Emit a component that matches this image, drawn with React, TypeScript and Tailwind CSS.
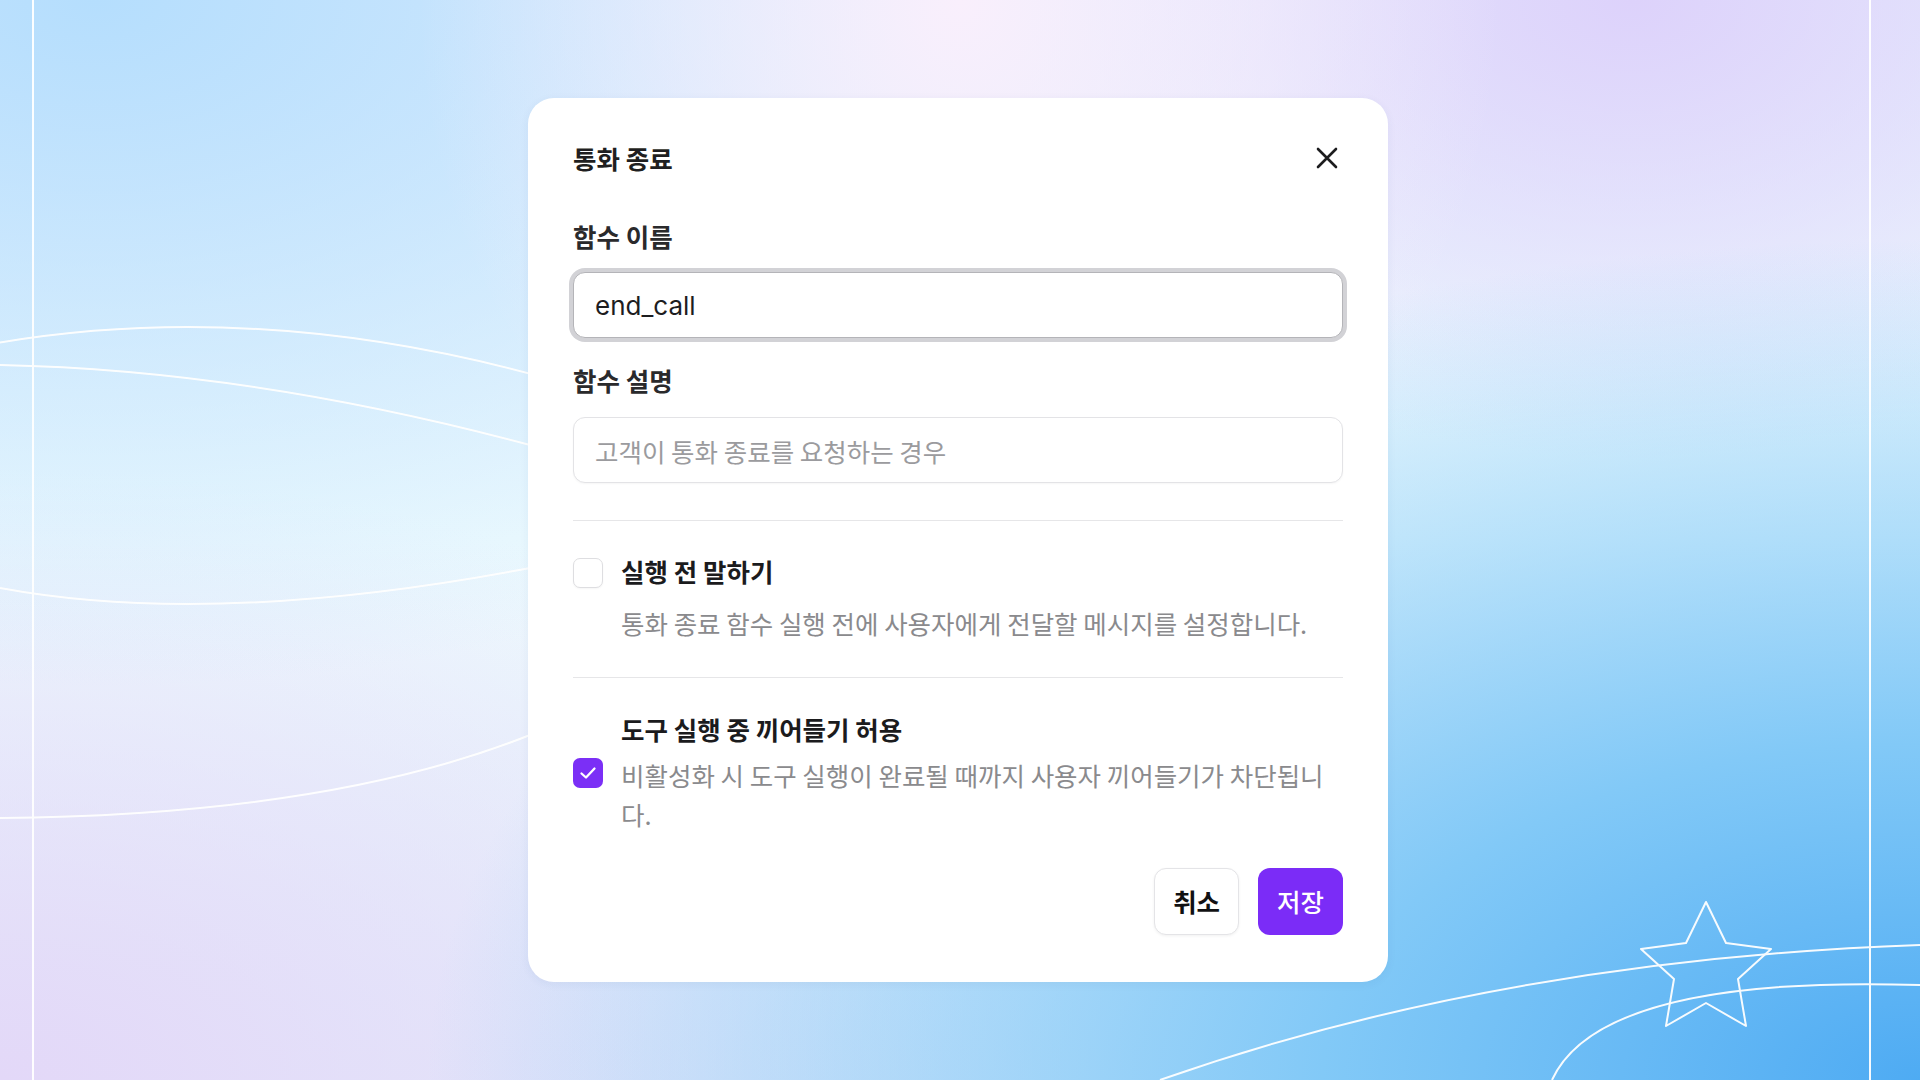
import React from 'react'

function CloseIcon() {
  return (
    <svg width="22" height="22" viewBox="0 0 22 22" fill="none">
      <path d="M2 2L20 20M20 2L2 20" stroke="#1c1c1e" strokeWidth="2.6" strokeLinecap="round" />
    </svg>
  )
}

function CheckIcon() {
  return (
    <svg width="22" height="22" viewBox="0 0 22 22" fill="none">
      <path d="M4.5 11.5L9 15.5L17.5 6.5" stroke="white" strokeWidth="2.3" strokeLinecap="round" strokeLinejoin="round" />
    </svg>
  )
}

// 배경 라인 + 별 장식
function Backdrop() {
  return (
    <svg className="absolute inset-0 h-full w-full" viewBox="0 0 1920 1080" preserveAspectRatio="none" fill="none">
      <g stroke="white" strokeWidth="2" opacity="0.95">
        <path d="M33 0V1080" />
        <path d="M1870 0V1080" />
        <path d="M-50 352Q240 290 560 382" />
        <path d="M0 365Q250 370 530 445" />
        <path d="M0 588Q215 628 530 568" />
        <path d="M0 818Q330 815 530 735" />
        <path d="M1160 1080Q1500 960 1920 945" />
        <path d="M1552 1080Q1600 975 1920 985" />
        <path
          d="M1706 902L1726 943L1771 949L1738 979L1746 1026L1706 1003L1666 1026L1674 979L1641 949L1686 943Z"
          strokeLinejoin="round"
        />
      </g>
    </svg>
  )
}

export default function App() {
  return (
    <div className="relative h-screen w-full overflow-hidden bg-[radial-gradient(ellipse_at_100%_100%,#4eabf3_0%,#82c9f7_22%,rgba(180,225,252,0)_55%),radial-gradient(ellipse_at_50%_0%,#f9effc_0%,rgba(249,239,252,0)_40%),radial-gradient(ellipse_at_85%_0%,#ddd2fb_0%,rgba(221,210,251,0)_30%),radial-gradient(ellipse_at_5%_0%,#b5defd_0%,rgba(190,227,253,0)_45%),radial-gradient(ellipse_at_0%_100%,#e3d8f8_0%,rgba(227,216,248,0)_40%),linear-gradient(180deg,#e8f0fd_0%,#effbfe_50%,#e4eefb_100%)] font-['Noto_Sans_CJK_KR',sans-serif]">
      <Backdrop />

      <div className="relative flex h-full items-center justify-center pr-[4px]">
        <div className="w-[860px] rounded-[26px] bg-white px-[45px] pt-[44px] pb-[47px] shadow-[0_2px_10px_rgba(40,60,120,0.06)]">
          {/* 헤더 */}
          <div className="flex h-[32px] items-center justify-between">
            <h1 className="text-[25.5px] leading-[32px] font-semibold text-[#1f1f21]">통화 종료</h1>
            <button type="button" className="flex h-[32px] w-[32px] items-center justify-center">
              <CloseIcon />
            </button>
          </div>

          {/* 함수 이름 */}
          <label className="mt-[46px] block text-[25.5px] leading-[32px] font-semibold text-[#2a2a2c]">함수 이름</label>
          <input
            type="text"
            defaultValue="end_call"
            readOnly
            className="mt-[20px] block h-[66px] w-full rounded-[12px] border border-[#b4b4b8] bg-white px-[21px] font-['Inter','Noto_Sans_CJK_KR',sans-serif] text-[26px] text-[#1d1d1f] shadow-[0_0_0_4px_#d2d2d6] outline-none"
          />

          {/* 함수 설명 */}
          <label className="mt-[26px] block text-[25.5px] leading-[32px] font-semibold text-[#2a2a2c]">함수 설명</label>
          <input
            type="text"
            placeholder="고객이 통화 종료를 요청하는 경우"
            className="mt-[21px] block h-[66px] w-full rounded-[12px] border border-[#e3e3e6] bg-white px-[21px] text-[25.5px] text-[#1d1d1f] shadow-[0_1px_2px_rgba(0,0,0,0.04)] outline-none placeholder:text-[#9b9b9e]"
          />

          <div className="mt-[37px] h-px bg-[#e6e6e8]" />

          {/* 실행 전 말하기 */}
          <div className="mt-[34px] flex items-start gap-[18px]">
            <span className="mt-[3px] h-[30px] w-[30px] shrink-0 rounded-[7px] border border-[#dedee1] bg-white shadow-[0_1px_2px_rgba(0,0,0,0.04)]" />
            <div>
              <p className="text-[25.5px] leading-[32px] font-bold text-[#1b1b1d]">실행 전 말하기</p>
              <p className="mt-[16px] text-[25.5px] leading-[39px] text-[#8a8a8d]">
                통화 종료 함수 실행 전에 사용자에게 전달할 메시지를 설정합니다.
              </p>
            </div>
          </div>

          <div className="mt-[35px] h-px bg-[#e6e6e8]" />

          {/* 도구 실행 중 끼어들기 허용 */}
          <div className="mt-[35px] flex items-center gap-[18px]">
            <span className="flex h-[30px] w-[30px] shrink-0 items-center justify-center rounded-[7px] bg-[#7b2ff6]">
              <CheckIcon />
            </span>
            <div className="min-w-0 flex-1">
              <p className="text-[25.5px] leading-[32px] font-bold text-[#1b1b1d]">도구 실행 중 끼어들기 허용</p>
              <p className="mt-[10px] text-[25.5px] leading-[39px] text-[#8a8a8d]">
                비활성화 시 도구 실행이 완료될 때까지 사용자 끼어들기가 차단됩니다.
              </p>
            </div>
          </div>

          {/* 버튼 */}
          <div className="mt-[35px] flex justify-end gap-[19px]">
            <button
              type="button"
              className="h-[67px] rounded-[12px] border border-[#e4e4e7] bg-white px-[18px] text-[25.5px] font-bold text-[#111113] shadow-[0_1px_3px_rgba(0,0,0,0.06)]"
            >
              취소
            </button>
            <button
              type="button"
              className="h-[67px] rounded-[12px] bg-[#7b2cf7] px-[19px] text-[25.5px] font-medium text-white"
            >
              저장
            </button>
          </div>
        </div>
      </div>
    </div>
  )
}
